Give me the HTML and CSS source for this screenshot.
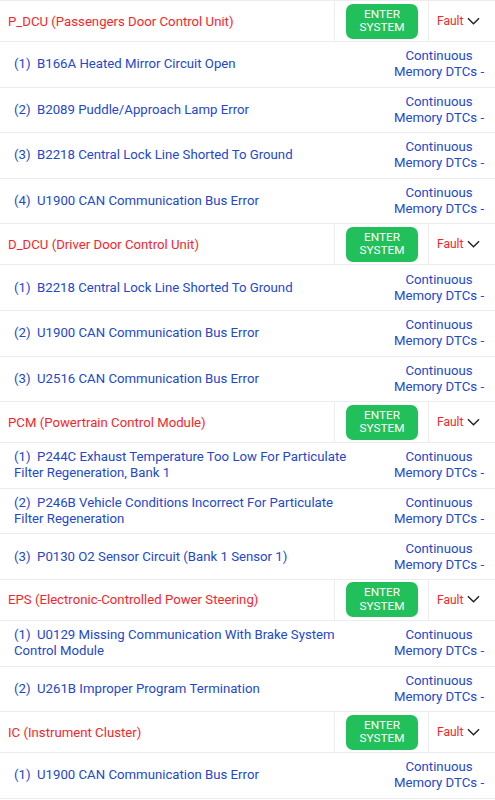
FILE: index.html
```html
<!DOCTYPE html>
<html>
<head>
<meta charset="utf-8">
<link rel="stylesheet" href="styles.css">
</head>
<body>
<div class="list">
  <div class="sys">
    <div class="sys-name">P_DCU (Passengers Door Control Unit)</div>
    <div class="sys-btn"><button class="enter">ENTER<br>SYSTEM</button></div>
    <div class="sys-fault">Fault <svg class="chev" viewBox="0 0 14 8" width="13" height="8"><path d="M1 1 L7 7 L13 1" fill="none" stroke="#222" stroke-width="1.5"/></svg></div>
  </div>
  <div class="dtc"><div class="dtc-text">(1)&nbsp; B166A Heated Mirror Circuit Open</div><div class="dtc-status">Continuous<br>Memory DTCs -</div></div>
  <div class="dtc"><div class="dtc-text">(2)&nbsp; B2089 Puddle/Approach Lamp Error</div><div class="dtc-status">Continuous<br>Memory DTCs -</div></div>
  <div class="dtc"><div class="dtc-text">(3)&nbsp; B2218 Central Lock Line Shorted To Ground</div><div class="dtc-status">Continuous<br>Memory DTCs -</div></div>
  <div class="dtc"><div class="dtc-text">(4)&nbsp; U1900 CAN Communication Bus Error</div><div class="dtc-status">Continuous<br>Memory DTCs -</div></div>

  <div class="sys">
    <div class="sys-name">D_DCU (Driver Door Control Unit)</div>
    <div class="sys-btn"><button class="enter">ENTER<br>SYSTEM</button></div>
    <div class="sys-fault">Fault <svg class="chev" viewBox="0 0 14 8" width="13" height="8"><path d="M1 1 L7 7 L13 1" fill="none" stroke="#222" stroke-width="1.5"/></svg></div>
  </div>
  <div class="dtc"><div class="dtc-text">(1)&nbsp; B2218 Central Lock Line Shorted To Ground</div><div class="dtc-status">Continuous<br>Memory DTCs -</div></div>
  <div class="dtc"><div class="dtc-text">(2)&nbsp; U1900 CAN Communication Bus Error</div><div class="dtc-status">Continuous<br>Memory DTCs -</div></div>
  <div class="dtc"><div class="dtc-text">(3)&nbsp; U2516 CAN Communication Bus Error</div><div class="dtc-status">Continuous<br>Memory DTCs -</div></div>

  <div class="sys">
    <div class="sys-name">PCM (Powertrain Control Module)</div>
    <div class="sys-btn"><button class="enter">ENTER<br>SYSTEM</button></div>
    <div class="sys-fault">Fault <svg class="chev" viewBox="0 0 14 8" width="13" height="8"><path d="M1 1 L7 7 L13 1" fill="none" stroke="#222" stroke-width="1.5"/></svg></div>
  </div>
  <div class="dtc"><div class="dtc-text">(1)&nbsp; P244C Exhaust Temperature Too Low For Particulate Filter Regeneration, Bank 1</div><div class="dtc-status">Continuous<br>Memory DTCs -</div></div>
  <div class="dtc"><div class="dtc-text">(2)&nbsp; P246B Vehicle Conditions Incorrect For Particulate Filter Regeneration</div><div class="dtc-status">Continuous<br>Memory DTCs -</div></div>
  <div class="dtc"><div class="dtc-text">(3)&nbsp; P0130 O2 Sensor Circuit (Bank 1 Sensor 1)</div><div class="dtc-status">Continuous<br>Memory DTCs -</div></div>

  <div class="sys">
    <div class="sys-name">EPS (Electronic-Controlled Power Steering)</div>
    <div class="sys-btn"><button class="enter">ENTER<br>SYSTEM</button></div>
    <div class="sys-fault">Fault <svg class="chev" viewBox="0 0 14 8" width="13" height="8"><path d="M1 1 L7 7 L13 1" fill="none" stroke="#222" stroke-width="1.5"/></svg></div>
  </div>
  <div class="dtc"><div class="dtc-text">(1)&nbsp; U0129 Missing Communication With Brake System Control Module</div><div class="dtc-status">Continuous<br>Memory DTCs -</div></div>
  <div class="dtc"><div class="dtc-text">(2)&nbsp; U261B Improper Program Termination</div><div class="dtc-status">Continuous<br>Memory DTCs -</div></div>

  <div class="sys">
    <div class="sys-name">IC (Instrument Cluster)</div>
    <div class="sys-btn"><button class="enter">ENTER<br>SYSTEM</button></div>
    <div class="sys-fault">Fault <svg class="chev" viewBox="0 0 14 8" width="13" height="8"><path d="M1 1 L7 7 L13 1" fill="none" stroke="#222" stroke-width="1.5"/></svg></div>
  </div>
  <div class="dtc"><div class="dtc-text">(1)&nbsp; U1900 CAN Communication Bus Error</div><div class="dtc-status">Continuous<br>Memory DTCs -</div></div>
</div>
</body>
</html>
```

FILE: styles.css
```css
html, body {
  margin: 0;
  padding: 0;
  background: #ffffff;
}
body {
  font-family: Roboto, "Noto Sans", sans-serif;
  font-size: 13.2px;
}
.list {
  display: flex;
  flex-direction: column;
  border-top: 1px solid #ececec;
}
.sys {
  display: grid;
  grid-template-columns: 335px 94px 1fr;
  height: 40px;
  border-bottom: 1px solid #ececec;
  box-sizing: content-box;
}
.sys-name {
  display: flex;
  align-items: center;
  padding-left: 8px;
  color: #f7252b;
  font-size: 13.2px;
  border-right: 1px solid #ececec;
}
.sys-btn {
  display: flex;
  align-items: center;
  justify-content: center;
  border-right: 1px solid #ececec;
}
.enter {
  width: 72px;
  height: 35px;
  border: none;
  border-radius: 7px;
  background: #22c05a;
  color: #ffffff;
  font-family: Roboto, "Noto Sans", sans-serif;
  font-size: 11.8px;
  line-height: 13.5px;
  padding: 0;
  margin-left: 1px;
}
.sys-fault {
  display: flex;
  align-items: center;
  padding-left: 8px;
  gap: 4px;
  color: #f7252b;
  font-size: 12px;
}
.chev {
  display: block;
  margin-top: -1px;
}
.dtc {
  display: grid;
  grid-template-columns: 1fr 112px;
  height: 44.6px;
  border-bottom: 1px solid #ececec;
  color: #2448cc;
  line-height: 16px;
}
.dtc-text {
  display: flex;
  align-items: center;
  padding-left: 14px;
  padding-right: 28px;
}
.dtc-status {
  display: flex;
  align-items: center;
  justify-content: center;
  text-align: center;
}
```
